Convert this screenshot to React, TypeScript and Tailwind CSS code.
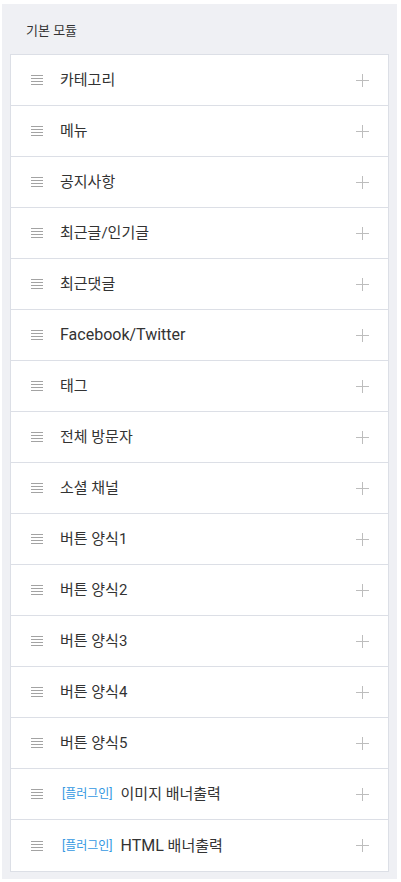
const modules: { label: string; plugin?: boolean }[] = [
  { label: '카테고리' },
  { label: '메뉴' },
  { label: '공지사항' },
  { label: '최근글/인기글' },
  { label: '최근댓글' },
  { label: 'Facebook/Twitter' },
  { label: '태그' },
  { label: '전체 방문자' },
  { label: '소셜 채널' },
  { label: '버튼 양식1' },
  { label: '버튼 양식2' },
  { label: '버튼 양식3' },
  { label: '버튼 양식4' },
  { label: '버튼 양식5' },
  { label: '이미지 배너출력', plugin: true },
  { label: 'HTML 배너출력', plugin: true },
];

const DragHandle = () => (
  <svg width="12" height="10" viewBox="0 0 12 10" className="shrink-0">
    <g stroke="#a3a3a3" strokeWidth="1">
      <line x1="0" y1="0.5" x2="12" y2="0.5" />
      <line x1="0" y1="3.5" x2="12" y2="3.5" />
      <line x1="0" y1="6.5" x2="12" y2="6.5" />
      <line x1="0" y1="9.5" x2="12" y2="9.5" />
    </g>
  </svg>
);

const PlusIcon = () => (
  <svg width="13" height="13" viewBox="0 0 13 13" className="shrink-0">
    <g stroke="#bdbdbd" strokeWidth="1">
      <line x1="6.5" y1="0" x2="6.5" y2="13" />
      <line x1="0" y1="6.5" x2="13" y2="6.5" />
    </g>
  </svg>
);

// latin runs render a touch larger than the hangul in the original
const Label = ({ text }: { text: string }) => (
  <span>
    {text.split(/([A-Za-z][A-Za-z/]*)/).map((part, i) =>
      /^[A-Za-z]/.test(part) ? (
        <span key={i} className="text-[16px]">
          {part}
        </span>
      ) : (
        part
      )
    )}
  </span>
);

export default function App() {
  return (
    <div
      className="min-h-screen bg-white pt-[4px] pl-[2px] pr-[4px]"
      style={{ fontFamily: 'Roboto, "Noto Sans CJK KR", sans-serif' }}
    >
      {/* Basic modules panel */}
      <section className="bg-[#eff0f4] px-[8px] pb-[7px]">
        <h2 className="h-[50px] pt-[17px] pl-[16px] text-[13px] leading-[20px] text-[#333]">기본 모듈</h2>
        <ul className="bg-white border border-[#dcdfe6] divide-y divide-[#dcdfe6]">
          {modules.map((m) => (
            <li key={m.label} className="h-[51px] flex items-center pl-[20px] pr-[19px]">
              <DragHandle />
              <div className="flex-1 flex items-center gap-[8px] ml-[17px] text-[15px] leading-[20px] text-[#333]">
                {m.plugin && <span className="ml-[2px] text-[12px] text-[#3398e2]">[플러그인]</span>}
                <Label text={m.label} />
              </div>
              <PlusIcon />
            </li>
          ))}
        </ul>
      </section>
      <div className="mt-[3px] h-[10px] bg-[#eff0f4]" />
    </div>
  );
}
